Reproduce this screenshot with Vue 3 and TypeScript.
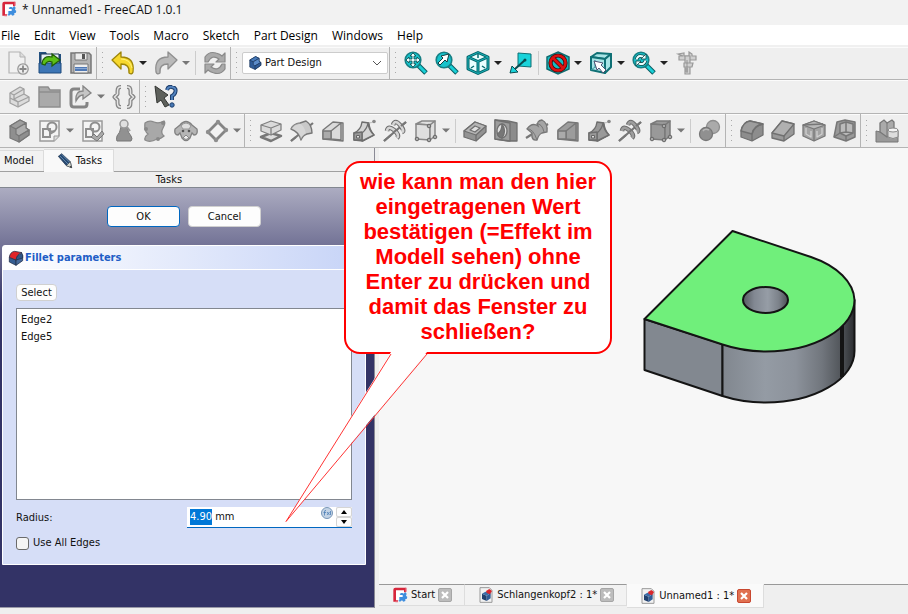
<script setup lang="ts">
import { onMounted, ref } from 'vue'

interface Tool {
  icon: string
  label: string
  menu?: boolean
  gap?: boolean
}
interface Group {
  combo?: boolean
  open?: boolean
  tools: Tool[]
}

const menus = ['File', 'Edit', 'View', 'Tools', 'Macro', 'Sketch', 'Part Design', 'Windows', 'Help']

const t = (icon: string, label: string, menu = false, gap = false): Tool => ({ icon, label, menu, gap })

const rows: Group[][] = [
  [
    { tools: [t('new', 'New'), t('open', 'Open'), t('save', 'Save')] },
    { tools: [t('undo', 'Undo', true), t('redo', 'Redo', true), t('refresh', 'Refresh', false, true)] },
    { combo: true, tools: [] },
    {
      open: true,
      tools: [
        t('fitAll', 'Fit all'), t('fitSel', 'Fit selection'), t('iso', 'Isometric', true), t('align', 'Align to selection'),
        t('style', 'Draw style', true, true), t('boundBox', 'Selection view', true), t('sync', 'Sync view', true), t('measure', 'Measure'),
      ],
    },
  ],
  [
    { tools: [t('part', 'Create part'), t('folder', 'Create group'), t('link', 'Make link', true), t('varset', 'Variable set')] },
    { open: true, tools: [t('whats', "What's this?")] },
  ],
  [
    {
      tools: [
        t('body', 'Create body'), t('sketch', 'Create sketch', true), t('validate', 'Validate sketch'), t('check', 'Check geometry'),
        t('binder', 'Shape binder'), t('clone', 'Clone'), t('datum', 'Datum plane', true),
      ],
    },
    {
      tools: [
        t('pad', 'Pad'), t('revolve', 'Revolution'), t('loft', 'Additive loft'), t('pipe', 'Additive pipe'),
        t('helix', 'Additive helix'), t('addBox', 'Additive box', true),
        t('pocket', 'Pocket', false, true), t('hole', 'Hole'), t('groove', 'Groove'), t('subLoft', 'Subtractive loft'),
        t('subPipe', 'Subtractive pipe'), t('subHelix', 'Subtractive helix'), t('subBox', 'Subtractive box', true),
        t('boolean', 'Boolean', false, true),
      ],
    },
    { tools: [t('fillet', 'Fillet'), t('chamfer', 'Chamfer'), t('draft', 'Draft'), t('thickness', 'Thickness')] },
    { open: true, tools: [t('mirror', 'Mirrored')] },
  ],
]

const helix = (f: string) =>
  `<path d="M1 22L23 3" stroke="#777" stroke-width="2.2"/><g fill="none" stroke="#6d6d6d" stroke-width="4.6"><path d="M4 12Q5 6 11 11T14 19M10 6Q12 0 17 6T19 13"/></g><g fill="none" stroke="${f}" stroke-width="2.6"><path d="M4 12Q5 6 11 11T14 19M10 6Q12 0 17 6T19 13"/></g><path d="M1 22L8 16M11 13L14 10.500M18 7L23 3" stroke="#777" stroke-width="2.2"/>`
const revolve = (f: string) =>
  `<path d="M1 22L23 4" stroke="#777" stroke-width="2.2"/><path d="M1 10Q3 5 10 4L16 2Q22 6 22 14L17 15Q13 16 11 21Q9 13 1 10Z" fill="${f}" stroke="#777" stroke-width="1.4" stroke-linejoin="round"/><path d="M1 10Q8 10 11 21Q12 17 16 15Q15 7 9 4Q3 5 1 10Z" fill="#fff" opacity=".25"/><path d="M1 22l5-4" stroke="#777" stroke-width="2.2"/>`
const loft = (f: string) =>
  `<g stroke="#777" stroke-width="1.4" stroke-linejoin="round"><path d="M2 11L12 3 22 4V22L12 21 2 20Z" fill="${f}"/><path d="M10 12L20 4V21L10 20Z" fill="${f}"/><path d="M2 12H10V20H2Z" fill="#aaa"/></g>`
const pipe = (f: string) =>
  `<g stroke="#6e6e6e" stroke-width="1.4" stroke-linejoin="round"><path d="M2 14Q9 11 10 3L17 4Q17 10 22 16L11 22 2 21Z" fill="${f}"/><path d="M10 14Q15 10 16 4Q17 12 22 16L10 22Z" fill="${f}"/><path d="M2 14L10 13V21L2 21Z" fill="#999"/></g><path d="M4.500 16.500h3v2.500H4.500z" fill="#ddd" stroke="#666"/><path d="M17 4Q20 4 22 2" stroke="#bbb" fill="none"/><circle cx="22" cy="2.500" r="1.800" fill="#888"/>`
const box = (f: string, s: string) =>
  `<g fill="${f}" stroke="${s}" stroke-width="1.500" stroke-linejoin="round"><path d="M2 5L8 2 21 2 16 6Z"/><path d="M2 5L16 6V21L2 20Z"/><path d="M16 6L21 2V17L16 21Z"/></g><g fill="#aaa" stroke="#666"><circle cx="15" cy="7" r="1.800"/><circle cx="3" cy="20" r="1.800"/><circle cx="15" cy="21" r="1.800"/><circle cx="21" cy="18" r="1.800"/></g>`
const bodyShape = (a: string, b: string, c: string, s: string) =>
  `<g stroke="${s}" stroke-width="1.2" stroke-linejoin="round"><path d="M3 7L13 1 19 4V9L22 11V16L12 23 3 19Z" fill="${a}"/><path d="M3 7L13 1 19 4 9 10Z" fill="${c}"/><path d="M9 10L19 4V9L22 11 12 17 9 15Z" fill="${b}"/><path d="M12 17L22 11V16L12 23Z" fill="${a}"/></g>`
const lens = `<path d="M14 14L22 22" stroke="#065b60" stroke-width="5"/><path d="M15 15L21.5 21.5" stroke="#19cfd6" stroke-width="3"/><circle cx="9" cy="9" r="7.8" fill="#16c3cb" stroke="#177e83" stroke-width="1.6"/>`
const logo = `<path d="M2 4Q2 1 5 1H21V8H9V22H2Z" fill="#d7263b"/><path d="M21 1V7M5 22H9" stroke="#e8697a" stroke-width="2"/><path d="M13 9l2-1 2 2 3-2 2 2-1 3 2 2-1 3-2 0 0 3-3 1-2-2-3 2-2-1 0-4z" fill="#3e8ede"/><path d="M6 5H18V9H11V12H16V15H11V20H6Z" fill="#fff"/>`
const redBlueBox = `<g stroke="#24324c" stroke-width="1.2" stroke-linejoin="round"><path d="M2 11L12 15V23L2 18Z" fill="#345c91"/><path d="M12 15L22 8V16L12 23Z" fill="#45689a"/><path d="M2 11Q3 3 10 2L21 4Q14 5 12 15Z" fill="#e02328"/><path d="M12 15Q13 7 21 5L22 8 22 12Z" fill="#315587"/></g>`
const braces = 'M9 2H8.500Q5.500 2 5.500 6V9L2.500 12L5.500 15V18Q5.500 22 8.500 22H9M15 2H15.500Q18.500 2 18.500 6V9L21.500 12L18.500 15V18Q18.500 22 15.500 22H15'

const icons: Record<string, string> = {
  logo,
  redBlueBox,
  doc: `<path d="M3 1H17L21 5V23H3Z" fill="#f2f2f2" stroke="#999" stroke-width="1.5"/><path d="M6 10L13 13V21L6 18Z" fill="#22416e"/><path d="M13 13L19 9V17L13 21Z" fill="#315c96"/><path d="M6 10L11 7 19 9 13 13Z" fill="#3b6da8"/><path d="M12 6L17 3 21 6 18 11 13 9Z" fill="#d8262c"/>`,
  pencil: `<path d="M2 5L7 1 20 13 22 22 14 19Z" fill="#274a73" stroke="#1d304a"/><path d="M4 4L17 17M7 2L19 14" stroke="#6f94b8" stroke-width="1.2"/><path d="M14 19L20 13 22 22Z" fill="#d3d7cf" stroke="#333" stroke-width=".7"/><path d="M19 21l2-2 1 3z" fill="#222"/>`,
  new: `<path d="M2 1H13L18 6V22H2Z" fill="#f1f1f1" stroke="#b3b3b3" stroke-width="1.2"/><path d="M13 1V6H18" fill="#ddd" stroke="#b3b3b3"/><circle cx="16" cy="18" r="5.2" fill="#eee" stroke="#999" stroke-width="1.3"/><path d="M16 14.500V21.500M12.500 18H19.500" stroke="#888" stroke-width="1.8"/>`,
  open: `<path d="M1 1H8L9 3H23V13H1Z" fill="#23507f"/><path d="M3 3H21V13H3Z" fill="#e6eef5" stroke="#1f3856"/><path d="M1 12H23V22H1Z" fill="#3d76b5" stroke="#1e4a7c"/><path d="M4 13Q5 4 14 6V3L22 9 14 15V11Q9 9 7 14Z" fill="#5cc016" stroke="#205c04" stroke-width="1.2"/>`,
  save: `<path d="M2 2H20L22 4V22H2Z" fill="#b3b3b3" stroke="#777" stroke-width="1.5"/><path d="M6 2H18V9H6Z" fill="#ececec" stroke="#777"/><path d="M13 3H16V8H13Z" fill="#555"/><path d="M5 13H19V22H5Z" fill="#eee" stroke="#777"/><path d="M6 16H18V20H6Z" fill="#5079b5"/><path d="M6 17.500H18" stroke="#88a8d5"/>`,
  undo: `<path d="M1 9L10 1V6Q24 6 22 21Q21 24 18 22Q19 13 10 13V18Z" fill="#f7d82d" stroke="#9d8508" stroke-width="1.3" stroke-linejoin="round"/><path d="M10 8Q19 8 21 17" fill="none" stroke="#fff27a"/>`,
  redo: `<path d="M23 9L14 1V6Q0 6 2 21Q3 24 6 22Q5 13 14 13V18Z" fill="#b9b9b9" stroke="#8f8f8f" stroke-width="1.3" stroke-linejoin="round"/>`,
  refresh: `<g fill="#aaa" stroke="#898989" stroke-width="1.2" stroke-linejoin="round"><path d="M2 11V6Q6 0 13 2Q17 3 19 5L22 2V11H13L16 8Q9 3 5 11Z"/><path d="M22 13V18Q18 24 11 22Q7 21 5 19L2 22V13H11L8 16Q15 21 19 13Z"/></g>`,
  fitAll: `${lens}<path d="M9 2L12 5H10V8H13V6L16 9 13 12V10H10V13H12L9 16 6 13H8V10H5V12L2 9 5 6V8H8V5H6Z" fill="#e8ffff" stroke="#104447" stroke-width=".8"/>`,
  fitSel: `${lens}<path d="M14 3L12 11 10 9 5 14 3 12 8 7 6 5Z" fill="#fff" stroke="#123e40"/>`,
  iso: `<g fill="none" stroke="#06666b" stroke-width="3" stroke-linejoin="round"><path d="M12 1.500L22 6V18L12 22.500 2 18V6Z" fill="#e9ffff"/><path d="M2 6L12 10.500 22 6M12 10.500V22.500"/></g><path d="M12 1.500L22 6V18L12 22.500 2 18V6ZM2 6L12 10.500 22 6M12 10.500V22.500" fill="none" stroke="#1bb8be" stroke-width=".9"/><path d="M12 3V7M5 17L8 15M19 17L16 15" stroke="#086b70" stroke-width="1.5"/>`,
  align: `<path d="M9 2L22 3V16L9 15Z" fill="#19d3da" stroke="#0f6e73"/><path d="M16 9L6 18" stroke="#0a4c50" stroke-width="2"/><path d="M1 22L3 15 9 21Z" fill="#19d3da" stroke="#0a4c50"/><circle cx="16" cy="9" r="1.500" fill="#0a4c50"/>`,
  style: `<path d="M12 1L23 6V18L12 23 1 18V6Z" fill="#14bcc2" stroke="#126c70" stroke-width="1.5"/><circle cx="12" cy="12" r="7.500" fill="none" stroke="#4b0a0a" stroke-width="4.200"/><path d="M7 7L17 17" stroke="#4b0a0a" stroke-width="4.200"/><circle cx="12" cy="12" r="7.500" fill="none" stroke="#dd1111" stroke-width="2.600"/><path d="M7 7L17 17" stroke="#dd1111" stroke-width="2.600"/>`,
  boundBox: `<g fill="#a8e4e6" stroke="#0f7075" stroke-width="2" stroke-linejoin="round"><path d="M2 6L8 2 22 3 16 8Z"/><path d="M2 6L16 8V22L2 19Z"/><path d="M16 8L22 3V16L16 22Z"/></g><path d="M6 9V16L2 19M6 16L16 17" stroke="#3b9da1" fill="none"/><path d="M5 10L14 12 12 14 17 19 14 22 10 17 8 19Z" fill="#fff" stroke="#446" stroke-width=".9"/>`,
  sync: `${lens}<g fill="none"><path d="M4.500 8.500Q6 3.500 11 5.500L13.500 7M13.500 9.500Q12 14.500 7 12.500L4.500 11" stroke="#104447" stroke-width="3.600"/><path d="M4.500 8.500Q6 3.500 11 5.500L13.500 7M13.500 9.500Q12 14.500 7 12.500L4.500 11" stroke="#e8ffff" stroke-width="2"/></g><path d="M14 3V8H9ZM4 15V10H9Z" fill="#e8ffff" stroke="#104447" stroke-width=".8"/>`,
  measure: `<g fill="#d0d0d0" stroke="#999" stroke-width="1.200"><path d="M3 3L9 2V5H14V1L17 3V5H21V9H4V5H8Z"/><path d="M10 5H15V23H10Z"/><path d="M9 12H18L17 16H9Z"/></g><path d="M12 9V22M10 18H13M10 20H13" stroke="#888" stroke-width=".8"/>`,
  part: `<g fill="#dcdcdc" stroke="#a0a0a0" stroke-width="1.300" stroke-linejoin="round"><path d="M3 8L13 2 17 4V9L22 12V16L11 22 3 18Z"/><path d="M3 8L7 10V14L11 17V22M7 10L17 4M7 14L17 9M11 17L22 12M3 13L11 17"/></g>`,
  folder: `<path d="M1 2H10L12 5H22V22H1Z" fill="#aaa" stroke="#8e8e8e" stroke-width="1.500"/><path d="M1 7H22" stroke="#8e8e8e" stroke-width="1.500"/>`,
  link: `<path d="M11 4H5Q2 4 2 7V19Q2 22 5 22H15Q18 22 18 19V17" fill="none" stroke="#858585" stroke-width="3"/><path d="M7 16Q6 6 14 6V1L22 8 14 14V10Q10 10 7 16Z" fill="#c5c5c5" stroke="#858585" stroke-width="1.300"/>`,
  varset: `<g fill="none" stroke-linejoin="round"><path d="${braces}" stroke="#858585" stroke-width="4"/><path d="${braces}" stroke="#e6e6e6" stroke-width="1.500"/></g>`,
  whats: `<path d="M1 1L14 10 10 13 15 20 11 22 7 15 3 18Z" fill="#5d605b" stroke="#343633"/><path d="M13 5Q14 1 18 2Q23 3 21 8Q20 10 18 11V15" fill="none" stroke="#1e3f6d" stroke-width="4"/><path d="M13 5Q14 1 18 2Q23 3 21 8Q20 10 18 11V15" fill="none" stroke="#5384c0" stroke-width="1.800"/><circle cx="18" cy="20" r="2.200" fill="#4677b3" stroke="#1e3f6d"/>`,
  body: bodyShape('#8f8f8f', '#adadad', '#9d9d9d', '#777'),
  bodyBlue: bodyShape('#2f5c99', '#5b8bc9', '#477ab9', '#1b365d'),
  sketch: `<path d="M2 2H21V17L16 22H2Z" fill="#f4f4f4" stroke="#9b9b9b" stroke-width="1.500"/><path d="M16 22V17H21" fill="#ddd" stroke="#999"/><g fill="none" stroke="#8e8e8e" stroke-width="2"><circle cx="14" cy="8" r="4.500"/><path d="M5 10H12V18H5ZM12 15L17 12"/></g>`,
  validate: `<path d="M2 2H21V22H2Z" fill="#f4f4f4" stroke="#9b9b9b" stroke-width="1.500"/><g fill="none" stroke="#8e8e8e" stroke-width="2"><circle cx="14" cy="8" r="4.500"/><path d="M5 10H12V18H5Z"/></g><path d="M10 18L13 15 16 18 21 12 23 15 16 22Z" fill="#aaa" stroke="#777"/>`,
  check: `<path d="M9 8Q8 14 5 17 4 21 5 22H19Q21 20 19 17 16 14 15 8Z" fill="#919191" stroke="#777"/><circle cx="12" cy="5" r="4" fill="#e0e0e0" stroke="#999" stroke-width="1.500"/><path d="M15 8L18 12" stroke="#999" stroke-width="2"/>`,
  binder: `<path d="M2 4Q6 1 11 3Q16 5 21 2Q23 4 20 9Q17 14 21 17Q18 20 14 20Q7 24 2 21Q1 18 5 15Q1 12 2 4Z" fill="#a8a8a8" stroke="#8a8a8a" stroke-width="1.300"/><g fill="#888"><circle cx="3" cy="10" r="2"/><circle cx="20" cy="4" r="2"/><circle cx="15" cy="20" r="2"/></g>`,
  clone: `<path d="M6 6Q12 -1 18 6L23 10Q24 16 20 16L18 14 16 19Q12 24 8 19L6 14 4 16Q0 16 1 10Z" fill="#b5b5b5" stroke="#808080" stroke-width="1.300"/><path d="M7 7Q12 1 17 7L15 10H9Z" fill="#dfdfdf" stroke="#999"/><circle cx="9" cy="12" r="1.300" fill="#555"/><circle cx="15" cy="12" r="1.300" fill="#555"/><path d="M9 19Q12 22 15 19L12 16Z" fill="#eee" stroke="#888"/>`,
  datum: `<path d="M3 13L13 3 21 11 11 21Z" fill="#f2f2f2" stroke="#858585" stroke-width="2.800"/><g fill="#8e8e8e"><circle cx="3" cy="13" r="2.200"/><circle cx="13" cy="3" r="2.200"/><circle cx="21" cy="11" r="2.200"/><circle cx="11" cy="21" r="2.200"/></g>`,
  pad: `<path d="M2 18L12 14 22 17 12 22Z" fill="#ddd" stroke="#777" stroke-width="2.500" stroke-linejoin="round"/><g fill="#dadada" stroke="#808080" stroke-width="1.300" stroke-linejoin="round"><path d="M2 6L12 2 22 5V11L12 16 2 12Z"/><path d="M2 6L12 9 22 5M12 9V16" fill="none"/></g>`,
  revolve: revolve('#c9c9c9'),
  loft: loft('#dadada'),
  pipe: pipe('#d5d5d5'),
  helix: helix('#d5d5d5'),
  addBox: box('#dfdfdf', '#888'),
  pocket: `<g stroke="#6f6f6f" stroke-width="1.300" stroke-linejoin="round"><path d="M1 12L12 3 23 7V13L13 22 1 18Z" fill="#939393"/><path d="M1 12L12 3 23 7 13 16Z" fill="#b5b5b5"/><path d="M7 11L12 7 17 9 12 13Z" fill="#e0e0e0"/><path d="M13 16V22"/></g>`,
  hole: `<g stroke="#707070" stroke-width="1.300" stroke-linejoin="round"><path d="M1 1L14 2 23 4V22L14 22 1 20Z" fill="#8b8b8b"/><path d="M1 1L16 4V22L1 20Z" fill="#9d9d9d"/><ellipse cx="8" cy="12" rx="5" ry="7" fill="#e0e0e0"/><path d="M8 5Q13 12 8 19Q4 18 3.500 15Q8 12 8 5Z" fill="#777"/></g>`,
  groove: `<path d="M1 19L23 5" stroke="#777" stroke-width="2.200"/><path d="M2 10Q7 3 13 7Q11 2 17 1Q23 4 22 13L17 14Q14 15 12 21Q6 22 7 14Z" fill="#a5a5a5" stroke="#777" stroke-width="1.300"/><path d="M2 10Q8 9 12 21M11 5Q17 4 19 13" stroke="#777" fill="none"/>`,
  subLoft: loft('#9c9c9c'),
  subPipe: pipe('#999'),
  subHelix: helix('#9e9e9e'),
  subBox: box('#999', '#7a7a7a'),
  boolean: `<circle cx="15" cy="8" r="6.500" fill="#aaa" stroke="#8d8d8d" stroke-width="1.300"/><circle cx="8" cy="15" r="6.500" fill="#909090" stroke="#777" stroke-width="1.300"/><path d="M5 12Q7 9 11 11" stroke="#b5b5b5" fill="none" stroke-width="1.500"/>`,
  fillet: `<g stroke="#707070" stroke-width="1.300" stroke-linejoin="round"><path d="M1 12Q3 3 10 2L23 5V16L12 22 1 18Z" fill="#8d8d8d"/><path d="M1 12Q3 3 10 2L23 5Q14 6 12 15Z" fill="#9d9d9d"/><path d="M12 15V22M12 15Q14 7 23 5" fill="none"/></g>`,
  chamfer: `<g stroke="#707070" stroke-width="1.300" stroke-linejoin="round"><path d="M1 14L11 2 23 5V15L13 22 1 19Z" fill="#999"/><path d="M1 14L11 2 23 5 13 17Z" fill="#b0b0b0"/><path d="M13 17V22"/></g>`,
  draft: `<g stroke="#777" stroke-width="1.300" stroke-linejoin="round"><path d="M1 6L12 2 23 6V17L12 22 1 17Z" fill="#a3a3a3"/><path d="M1 6L12 10 23 6 12 2Z" fill="#b8b8b8"/><path d="M12 10V22M1 6L21 5" fill="none"/><path d="M4 9V15L9 18V12M20 9V15L15 18V12" stroke="#d0d0d0" fill="none"/></g>`,
  thickness: `<g stroke="#777" stroke-width="1.500" stroke-linejoin="round"><path d="M4 3L12 1 22 3V18L13 22 1 18Z" fill="#999"/><path d="M7 5L13 3 20 5V14L13 17 7 14Z" fill="#bbb"/><path d="M13 3V13L7 14M13 13L20 14M1 18L7 14M13 17V22" fill="none"/></g>`,
  mirror: `<path d="M1 12L10 14Q17 17 23 12V23H1Z" fill="#999" stroke="#777"/><path d="M5 4L9 1 12 4 17 1 19 3V13L12 18 5 13Z" fill="#aaa" stroke="#777" stroke-width="1.300"/><path d="M12 4V17" stroke="#777"/><path d="M13 11V18Q18 21 23 18V11Z" fill="#ddd" stroke="#888"/><ellipse cx="18" cy="11" rx="5" ry="2" fill="#f4f4f4" stroke="#888"/>`,
}

const edges = ['Edge2', 'Edge5']
const docTabs = [
  { icon: 'logo', name: 'Start', active: false },
  { icon: 'doc', name: 'Schlangenkopf2 : 1*', active: false },
  { icon: 'doc', name: 'Unnamed1 : 1*', active: true },
]
const noteLines = [
  'wie kann man den hier', 'eingetragenen Wert', 'bestätigen (=Effekt im', 'Modell sehen) ohne',
  'Enter zu drücken und', 'damit das Fenster zu', 'schließen?',
]

const radius = ref('4.90 mm')
const allEdges = ref(false)
const radiusInput = ref<HTMLInputElement | null>(null)

function step(delta: number) {
  radius.value = `${Math.max(0, parseFloat(radius.value) + delta).toFixed(2)} mm`
}

onMounted(() => {
  radiusInput.value?.focus()
  radiusInput.value?.setSelectionRange(0, 4)
})
</script>

<template>
  <div class="window">
    <header class="titlebar">
      <svg class="app-logo" viewBox="0 0 24 24" v-html="icons.logo" />
      <span>* Unnamed1 - FreeCAD 1.0.1</span>
    </header>
    <nav class="menubar">
      <a v-for="m in menus" :key="m" href="#">{{ m }}</a>
    </nav>

    <div v-for="(row, r) in rows" :key="r" class="toolbar">
      <div v-for="(group, g) in row" :key="g" class="group" :class="{ first: g === 0, open: group.open }">
        <span v-if="g > 0" class="grip" />
        <label v-if="group.combo" class="combo">
          <svg class="combo-icon" viewBox="0 0 24 24" v-html="icons.bodyBlue" />
          <select aria-label="Workbench">
            <option>Part Design</option>
          </select>
          <svg class="chevron" viewBox="0 0 10 6"><path d="M1 1L5 5 9 1" fill="none" stroke="#555" /></svg>
        </label>
        <template v-for="tool in group.tools" :key="tool.icon">
          <span v-if="tool.gap" class="divider" />
          <button class="tool" :aria-label="tool.label">
            <svg viewBox="0 0 24 24" v-html="icons[tool.icon]" />
          </button>
          <button v-if="tool.menu" class="caret" :class="{ dim: r > 0 || tool.icon === 'redo' }" :aria-label="tool.label + ' menu'" />
        </template>
      </div>
    </div>

    <main class="workspace">
      <aside class="side">
        <div class="side-tabs">
          <button class="side-tab">Model</button>
          <button class="side-tab current">
            <svg viewBox="0 0 24 24" v-html="icons.pencil" />Tasks
          </button>
        </div>
        <div class="side-title">Tasks</div>
        <div class="tasks">
          <div class="actions">
            <button class="action primary">OK</button>
            <button class="action">Cancel</button>
          </div>
          <section class="card">
            <h2>
              <svg viewBox="0 0 24 24" v-html="icons.redBlueBox" />Fillet parameters
            </h2>
            <div class="card-body">
              <button class="select-button">Select</button>
              <ul class="edges">
                <li v-for="e in edges" :key="e">{{ e }}</li>
              </ul>
              <div class="field">
                <label for="radius">Radius:</label>
                <div class="spin">
                  <input id="radius" ref="radiusInput" v-model="radius" type="text" />
                  <svg class="formula" viewBox="0 0 12 12">
                    <circle cx="6" cy="6" r="5.500" fill="#c3d3e5" stroke="#7896b8" />
                    <path d="M5 3.500Q3.500 3 3.500 5V8.500M2.500 5.500H5M6 5L8.500 8M8.500 5L6 8M9.500 4V8" fill="none" stroke="#4b7db5" stroke-width=".8" />
                  </svg>
                  <div class="steps">
                    <button aria-label="Increase" @click="step(1)"><svg viewBox="0 0 6 4"><path d="M0 4L3 0 6 4Z" /></svg></button>
                    <button aria-label="Decrease" @click="step(-1)"><svg viewBox="0 0 6 4"><path d="M0 0L3 4 6 0Z" /></svg></button>
                  </div>
                </div>
              </div>
              <label class="check"><input v-model="allEdges" type="checkbox" />Use All Edges</label>
            </div>
          </section>
        </div>
      </aside>

      <section class="documents">
        <div class="viewport">
          <svg class="solid" viewBox="636 223 226 186">
            <defs>
              <linearGradient id="side" gradientUnits="userSpaceOnUse" x1="723" x2="855" y1="0" y2="0">
                <stop offset="0" stop-color="#81878f" />
                <stop offset=".32" stop-color="#949ba4" />
                <stop offset=".55" stop-color="#8c929b" />
                <stop offset=".75" stop-color="#71767d" />
                <stop offset=".9" stop-color="#505459" />
                <stop offset="1" stop-color="#292b2e" />
              </linearGradient>
              <linearGradient id="bore">
                <stop offset="0" stop-color="#555a61" />
                <stop offset=".25" stop-color="#828892" />
                <stop offset=".55" stop-color="#969da6" />
                <stop offset=".8" stop-color="#7b8189" />
                <stop offset="1" stop-color="#4a4e54" />
              </linearGradient>
            </defs>
            <g stroke="#141414" stroke-width="2" stroke-linejoin="round">
              <path d="M644.500 319L722.500 344V396L644.500 370Z" fill="#828890" />
              <path d="M722.500 344L854.500 300V351A89 51.500 0 0 1 765.500 402.500A89 51.500 0 0 1 722.500 396Z" fill="url(#side)" />
              <path d="M842 325V377" stroke-width="4" />
              <path d="M732.500 231L811 257A89 51.500 0 0 1 854.500 300A89 51.500 0 0 1 765.500 351.500A89 51.500 0 0 1 722.500 344.500L644.500 319Z" fill="#70ef7b" />
              <ellipse cx="765.500" cy="300" rx="22.500" ry="13" fill="url(#bore)" />
            </g>
          </svg>
        </div>
        <div class="doc-tabs">
          <div v-for="d in docTabs" :key="d.name" class="doc-tab" :class="{ active: d.active }">
            <svg class="doc-icon" viewBox="0 0 24 24" v-html="icons[d.icon]" />
            <span>{{ d.name }}</span>
            <button class="close" :aria-label="'Close ' + d.name">
              <svg viewBox="0 0 10 10"><path d="M2 2L8 8M8 2L2 8" stroke="#fff" stroke-width="2.200" /></svg>
            </button>
          </div>
          <span class="tab-rest" />
        </div>
      </section>
    </main>
    <footer class="status" />

    <div class="note">
      <p><span v-for="line in noteLines" :key="line">{{ line }}</span></p>
      <svg class="tail" viewBox="0 0 144 172">
        <path d="M106 0L1 169.500 142 0Z" fill="#fff" />
        <path d="M106 2L1 169.500 142 2" fill="none" stroke="#f33" stroke-width="1" />
      </svg>
    </div>
  </div>
</template>

<style>
body {
  margin: 0;
}
</style>

<style scoped>
.window {
  position: relative;
  display: flex;
  flex-direction: column;
  min-height: 100vh;
  overflow: hidden;
  background: #efefef;
  color: #111;
  font: 11px/16px 'DejaVu Sans Condensed', 'DejaVu Sans', sans-serif;
}
.window * {
  box-sizing: border-box;
}
button,
input,
select {
  margin: 0;
  padding: 0;
  border: 0;
  color: inherit;
  font: inherit;
}
svg {
  display: block;
  flex: none;
}
.titlebar {
  display: flex;
  align-items: flex-start;
  gap: 5px;
  height: 25px;
  padding: 1px;
  background: #f2f2f2;
  font: 12px/18px 'Open Sans', sans-serif;
}
.app-logo {
  width: 16px;
  height: 16px;
}
.menubar {
  display: flex;
  gap: 14px;
  height: 22px;
  padding: 0 1px;
  border-bottom: 2px solid #f0f0f0;
  background: #fff;
  font: 12px/21px 'Open Sans', sans-serif;
}
.menubar a {
  color: #000;
  text-decoration: none;
}
.toolbar {
  display: flex;
  height: 34px;
  border-bottom: 1px solid #b4b4b4;
  box-shadow: inset 0 1px #fbfbfb;
}
.toolbar:nth-of-type(1) {
  height: 33px;
}
.group {
  display: flex;
  align-items: center;
  border-right: 1px solid #b4b4b4;
}
.group.first {
  padding-left: 3px;
}
.group.open {
  border-right: 0;
}
.grip {
  width: 3px;
  height: 26px;
  margin: 0 3px 0 4px;
  background: radial-gradient(circle, #aaa 1px, transparent 1px) 0 0 / 3px 5px;
}
.tool {
  display: grid;
  place-items: center;
  width: 31px;
  height: 30px;
  background: none;
}
.tool svg {
  width: 24px;
  height: 24px;
}
.caret {
  width: 12px;
  height: 20px;
  background: #222;
  clip-path: polygon(1px 8px, 9px 8px, 5px 12px);
}
.caret.dim {
  background: #777;
}
.divider {
  width: 1px;
  height: 24px;
  margin: 0 3px 0 2px;
  background: #ccc;
}
.combo {
  display: grid;
  grid-template-columns: 22px 1fr 18px;
  align-items: center;
  width: 146px;
  height: 22px;
  margin: 0 1px;
  border: 1px solid #ccc;
  border-radius: 2px;
  background: #fff;
}
.combo select {
  grid-area: 1 / 1 / 2 / 4;
  padding-left: 22px;
  appearance: none;
  background: transparent;
}
.combo-icon {
  grid-area: 1 / 1;
  width: 14px;
  height: 14px;
  margin-left: 5px;
}
.chevron {
  grid-area: 1 / 3;
  width: 10px;
  height: 6px;
  margin-left: 3px;
}
.workspace {
  display: flex;
  flex: 1;
  gap: 4px;
}
.side {
  display: flex;
  flex-direction: column;
  flex: 0 0 375px;
  border-right: 1px solid #8a8a95;
}
.side-tabs {
  display: flex;
  align-items: flex-end;
  height: 24px;
  border-bottom: 1px solid #a0a0a0;
}
.side-tab {
  height: 21px;
  padding: 0 9px 0 4px;
  border: solid #dcdcdc;
  border-width: 1px 1px 0 0;
  background: #f2f2f2;
}
.side-tab.current {
  display: flex;
  align-items: center;
  gap: 3px;
  height: 23px;
  margin-bottom: -1px;
  padding: 0 11px 0 13px;
  background: #f9f9f9;
}
.side-tab svg {
  width: 16px;
  height: 16px;
}
.side-title {
  height: 16px;
  padding-right: 36px;
  border-bottom: 1px solid #828790;
  text-align: center;
  line-height: 16px;
}
.tasks {
  flex: 1;
  padding: 18px 8px 16px 2px;
  border-bottom: 1px solid #9a9aa8;
  background: linear-gradient(#acacc1, #333366 121px);
}
.actions {
  display: flex;
  justify-content: center;
  gap: 8px;
  margin-bottom: 18px;
}
.action {
  width: 73px;
  height: 21px;
  border: 1px solid #d0d0d0;
  border-radius: 4px;
  background: #fdfdfd;
}
.action.primary {
  border-color: #0067c0;
}
.card {
  border: 1px solid #fff;
  border-radius: 3px 3px 0 0;
  background: #d6def7;
}
.card h2 {
  display: flex;
  align-items: center;
  gap: 1px;
  height: 24px;
  margin: 0;
  padding-left: 5px;
  border-bottom: 1px solid #fff;
  background: linear-gradient(90deg, #fff, #c6d3f7);
  color: #215dc6;
  font-size: 11px;
  font-weight: bold;
}
.card h2 svg {
  width: 16px;
  height: 16px;
}
.card-body {
  display: flex;
  flex-direction: column;
  align-items: stretch;
  gap: 7px;
  padding: 14px 13px 13px 13px;
}
.select-button {
  align-self: flex-start;
  width: 41px;
  height: 17px;
  border: 1px solid #d0d0d0;
  border-radius: 4px;
  background: #fdfdfd;
}
.edges {
  height: 192px;
  margin: 0;
  padding: 2px 4px;
  border: 1px solid #828790;
  background: #fff;
  list-style: none;
  line-height: 17px;
}
.field {
  display: flex;
  align-items: center;
  justify-content: space-between;
}
.spin {
  display: flex;
  width: 165px;
  height: 21px;
  border-bottom: 1px solid #0067c0;
  background: #fff;
}
.spin input {
  flex: 1;
  min-width: 0;
  padding-left: 3px;
  outline: 0;
  background: transparent;
}
.spin input::selection {
  background: #0078d7;
  color: #fff;
}
.formula {
  width: 12px;
  height: 12px;
}
.steps {
  display: grid;
  width: 16px;
  margin-left: 3px;
  background: #f0f0f0;
}
.steps button {
  display: grid;
  place-items: center;
  border: 1px solid #d5d5d5;
  border-radius: 2px;
  background: #fdfdfd;
}
.steps svg {
  width: 6px;
  height: 4px;
}
.check {
  display: flex;
  align-items: center;
  gap: 4px;
}
.check input {
  width: 13px;
  height: 13px;
  border: 1px solid #6b6b6b;
  border-radius: 3px;
  appearance: none;
  background: #f5f5f5;
}
.check input:checked {
  background: #0067c0;
}
.documents {
  display: flex;
  flex: 1;
  flex-direction: column;
  min-width: 0;
}
.viewport {
  position: relative;
  flex: 1;
  background: #f7f7f7;
}
.solid {
  position: absolute;
  top: 75px;
  left: 257px;
  width: 226px;
  height: 186px;
}
.doc-tabs {
  display: flex;
  align-items: flex-start;
  height: 24px;
}
.doc-tab {
  display: flex;
  align-items: center;
  gap: 3px;
  height: 22px;
  padding: 0 12px 0 13px;
  border: solid #ddd;
  border-width: 0 1px 1px 0;
  border-top: 1px solid #999;
  background: #f2f2f2;
}
.doc-tab.active {
  height: 24px;
  border-top-color: #fafafa;
  background: #fafafa;
}
.tab-rest {
  flex: 1;
  border-top: 1px solid #999;
}
.doc-icon {
  width: 16px;
  height: 16px;
}
.close {
  display: grid;
  place-items: center;
  width: 14px;
  height: 14px;
  border: 1px solid #a6a6a6;
  border-radius: 2px;
  background: #bcbcbc;
}
.active .close {
  border-color: #c8472f;
  background: #e07050;
}
.close svg {
  width: 10px;
  height: 10px;
}
.status {
  height: 6px;
}
.note {
  position: absolute;
  top: 161px;
  left: 344px;
  width: 268px;
  height: 193px;
  border: 2px solid #f00;
  border-radius: 16px;
  background: #fff;
  color: #f00;
  font: bold 22px/25px 'Liberation Sans', Arial, sans-serif;
  text-align: center;
  white-space: nowrap;
}
.note p {
  margin: 0;
  padding-top: 6px;
}
.note p span {
  display: block;
}
.tail {
  position: absolute;
  top: 189px;
  left: -61px;
  width: 144px;
  height: 172px;
}
</style>
